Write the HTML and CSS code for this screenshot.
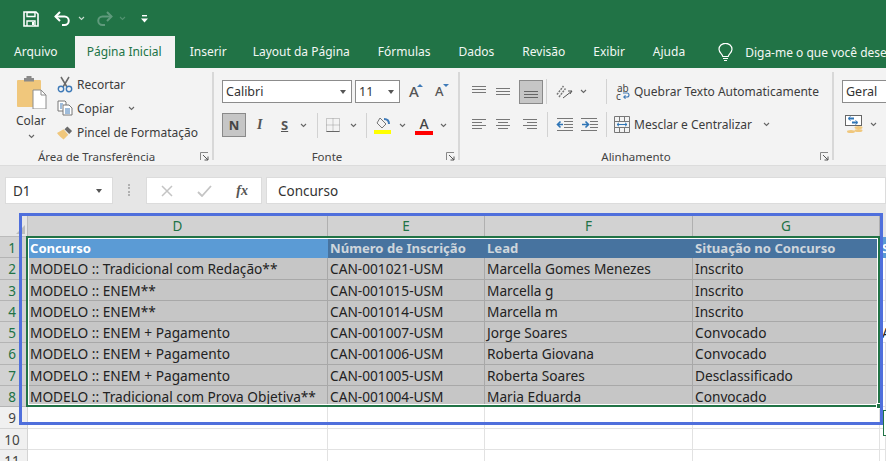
FILE: index.html
```html
<!DOCTYPE html>
<html lang="pt-BR">
<head>
<meta charset="utf-8">
<title>Excel</title>
<link rel="stylesheet" href="styles.css">
</head>
<body>
<div class="app">
  <header class="titlebar">
    <svg class="qa-save" width="16" height="16" viewBox="0 0 16 16"><path d="M1 1h12l2 2v12H1z" fill="none" stroke="#fff" stroke-width="1.6"/><path d="M4 1.500h8v4H4zM4 15v-5h8v5" fill="none" stroke="#fff" stroke-width="1.4"/><rect x="9" y="11" width="2" height="3" fill="#fff"/></svg>
    <svg class="qa-undo" width="17" height="16" viewBox="0 0 17 16"><path d="M1.500 5.500h9a4.200 4.200 0 0 1 0 8.500H8" fill="none" stroke="#fff" stroke-width="2"/><path d="M6 1 1.500 5.500 6 10" fill="none" stroke="#fff" stroke-width="2"/></svg>
    <svg class="chev qa-c1" width="7" height="5" viewBox="0 0 7 5"><path d="M1 1l2.500 2.500L6 1" fill="none" stroke="#c8dcd0" stroke-width="1.100"/></svg>
    <svg class="qa-redo" width="17" height="16" viewBox="0 0 17 16"><path d="M15.500 5.500h-9a4.200 4.200 0 0 0 0 8.500H9" fill="none" stroke="#5f9a7c" stroke-width="2"/><path d="M11 1l4.500 4.500L11 10" fill="none" stroke="#5f9a7c" stroke-width="2"/></svg>
    <svg class="chev qa-c2" width="7" height="5" viewBox="0 0 7 5"><path d="M1 1l2.500 2.500L6 1" fill="none" stroke="#5f9a7c" stroke-width="1.100"/></svg>
    <svg class="qa-more" width="7" height="8" viewBox="0 0 7 8"><rect x="1" y="0" width="5" height="1.400" fill="#fff"/><path d="M0 3.500h7L3.500 7.500z" fill="#fff"/></svg>
  </header>

  <nav class="tabs">
    <span class="tab tab-file">Arquivo</span>
    <span class="tab tab-active">Página Inicial</span>
    <span class="tab tab-ins">Inserir</span>
    <span class="tab">Layout da Página</span>
    <span class="tab">Fórmulas</span>
    <span class="tab">Dados</span>
    <span class="tab">Revisão</span>
    <span class="tab">Exibir</span>
    <span class="tab">Ajuda</span>
    <svg class="bulb" width="15" height="19" viewBox="0 0 15 19"><path d="M4.800 13.500C4.500 11 1 9.800 1 6.300a6.500 6 0 0 1 13 0c0 3.500-3.500 4.700-3.800 7.200z" fill="none" stroke="#fff" stroke-width="1.200"/><path d="M5 15.500h5M6 17.500h3" stroke="#fff" stroke-width="1.200"/></svg>
    <span class="tell">Diga-me o que você dese</span>
  </nav>

  <section class="ribbon">
    <div class="group g-clip">
      <div class="group-body clip-body">
        <div class="paste">
          <svg width="31" height="33" viewBox="0 0 31 33"><rect x="1" y="4" width="24" height="27" rx="1" fill="#f0c77c"/><path d="M8 4V2h2.500V0h5v2H18v3.500H8z" fill="#8a8a8a"/><path d="M17 14h8l5 5v14H17z" fill="#fff" stroke="#8c8c8c"/><path d="M25 14v5h5" fill="none" stroke="#8c8c8c"/></svg>
          <span class="paste-label">Colar</span>
          <svg class="chev" width="7" height="5" viewBox="0 0 7 5"><path d="M1 1l2.500 2.500L6 1" fill="none" stroke="#666" stroke-width="1.100"/></svg>
        </div>
        <div class="clip-list">
          <div class="clip-item">
            <svg width="16" height="17" viewBox="0 0 16 17"><path d="M4 1l6 10M12 1L6 11" stroke="#6a6a6a" stroke-width="1.500" fill="none"/><circle cx="4" cy="13" r="2.700" fill="none" stroke="#3e7ab8" stroke-width="1.400"/><circle cx="12" cy="13" r="2.700" fill="none" stroke="#3e7ab8" stroke-width="1.400"/></svg>
            <span>Recortar</span>
          </div>
          <div class="clip-item">
            <svg width="16" height="16" viewBox="0 0 16 16"><path d="M1 1h7l1 1v9H1z" fill="#fff" stroke="#777"/><path d="M6 5h6l3 3v7H6z" fill="#fff" stroke="#777"/><path d="M3 4h3M3 6h2M3 8h2M8 9h5M8 11h5M8 13h5" stroke="#3e7ab8"/></svg>
            <span>Copiar</span>
            <svg class="chev copy-chev" width="7" height="5" viewBox="0 0 7 5"><path d="M1 1l2.500 2.500L6 1" fill="none" stroke="#666" stroke-width="1.100"/></svg>
          </div>
          <div class="clip-item">
            <svg width="16" height="15" viewBox="0 0 17 15"><path d="M0 8l7-4 5 6-5 5C5 13 2 11 0 8z" fill="#f0c77c"/><path d="M8 4l5 5 3-3-5-5z" fill="#6a6a6a"/></svg>
            <span>Pincel de Formatação</span>
          </div>
        </div>
      </div>
      <div class="group-label clip-label">Área de Transferência<svg class="launch" width="9" height="9" viewBox="0 0 9 9"><path d="M.5 8V.5H8" fill="none" stroke="#888"/><path d="M3 3l5 5M8 4.500V8H4.500" fill="none" stroke="#555"/></svg></div>
    </div>

    <div class="group g-font">
      <div class="group-body font-body">
        <div class="row row-font">
          <div class="combo combo-name"><span>Calibri</span><i class="caret"></i></div>
          <div class="combo combo-size"><span>11</span><i class="caret"></i></div>
          <span class="grow">A<i class="tri-up"></i></span>
          <span class="shrink">A<i class="tri-down"></i></span>
        </div>
        <div class="row row-fmt">
          <span class="btn-on btn-bold">N</span>
          <span class="fmt-i">I</span>
          <span class="fmt-s">S</span>
          <svg class="chev c-s" width="7" height="5" viewBox="0 0 7 5"><path d="M1 1l2.500 2.500L6 1" fill="none" stroke="#666" stroke-width="1.100"/></svg>
          <i class="vsep s1"></i>
          <svg class="borders" width="14" height="14" viewBox="0 0 14 14"><path d="M.5.500h13v13H.5zM7 .5v13M.5 7h13" fill="none" stroke="#9a9a9a" stroke-dasharray="1 1"/><path d="M.5 13.500h13" stroke="#666"/></svg>
          <svg class="chev c-b" width="7" height="5" viewBox="0 0 7 5"><path d="M1 1l2.500 2.500L6 1" fill="none" stroke="#666" stroke-width="1.100"/></svg>
          <i class="vsep s2"></i>
          <svg class="fill" width="17" height="17" viewBox="0 0 17 17"><path d="M6 1l6 6-4 4-5-5z" fill="#f3f3f3" stroke="#777"/><path d="M10 2c3 0 5 2 5 5" fill="none" stroke="#3e7ab8" stroke-width="2"/><rect x="0" y="13" width="17" height="4" fill="#ffff00"/></svg>
          <svg class="chev c-f" width="7" height="5" viewBox="0 0 7 5"><path d="M1 1l2.500 2.500L6 1" fill="none" stroke="#666" stroke-width="1.100"/></svg>
          <span class="color-a">A</span>
          <svg class="chev c-a" width="7" height="5" viewBox="0 0 7 5"><path d="M1 1l2.500 2.500L6 1" fill="none" stroke="#666" stroke-width="1.100"/></svg>
        </div>
      </div>
      <div class="group-label font-label">Fonte<svg class="launch" width="9" height="9" viewBox="0 0 9 9"><path d="M.5 8V.5H8" fill="none" stroke="#888"/><path d="M3 3l5 5M8 4.500V8H4.500" fill="none" stroke="#555"/></svg></div>
    </div>

    <div class="group g-align">
      <div class="group-body align-body">
        <div class="row row-a1">
          <svg class="al" width="16" height="16" viewBox="0 0 16 16"><path d="M1 2.500h14M1 5.500h14M1 8.500h14" stroke="#777"/></svg>
          <svg class="al" width="16" height="16" viewBox="0 0 16 16"><path d="M1 4.500h14M1 7.500h14M1 10.500h14" stroke="#777"/></svg>
          <span class="btn-on btn-va"><svg width="16" height="16" viewBox="0 0 16 16"><path d="M1 7.500h14M1 10.500h14M1 13.500h14" stroke="#666"/></svg></span>
          <i class="vsep v1"></i>
          <svg class="orient" width="20" height="16" viewBox="0 0 20 16"><path d="M2 10.500 8.500 2M4 13l6.500-8.500" stroke="#777" fill="none" stroke-width="1.500" stroke-dasharray="2 1"/><path d="M8 14l9-7M17 7h-4M17 7l-2 3" stroke="#555" fill="none"/></svg>
          <svg class="chev" width="7" height="5" viewBox="0 0 7 5"><path d="M1 1l2.500 2.500L6 1" fill="none" stroke="#666" stroke-width="1.100"/></svg>
          <i class="vsep v2"></i>
          <span class="wrap"><span class="wrap-ab">ab</span><span class="wrap-c">c</span><svg width="7" height="7" viewBox="0 0 7 7"><path d="M0 1h4a2 2 0 0 1 0 4H1M2.500 3.300.8 5l1.700 1.700" fill="none" stroke="#3e7ab8" stroke-width="1.100"/></svg></span>
          <span class="wrap-text">Quebrar Texto Automaticamente</span>
        </div>
        <div class="row row-a2">
          <svg class="al" width="16" height="16" viewBox="0 0 16 16"><path d="M1 2.500h14M1 5.500h10M1 8.500h14M1 11.500h10" stroke="#777"/></svg>
          <svg class="al" width="16" height="16" viewBox="0 0 16 16"><path d="M1 2.500h14M3 5.500h10M1 8.500h14M3 11.500h10" stroke="#777"/></svg>
          <svg class="al al-r" width="16" height="16" viewBox="0 0 16 16"><path d="M1 2.500h14M5 5.500h10M1 8.500h14M5 11.500h10" stroke="#777"/></svg>
          <i class="vsep v3"></i>
          <svg class="ind" width="17" height="14" viewBox="0 0 17 14"><path d="M1 .5h16M8 3.500h9M8 6.500h9M8 9.500h9M1 12.500h16" stroke="#777"/><path d="M7 6.500H2M4.500 3.500l-3 3 3 3" stroke="#2e75b6" stroke-width="1.600" fill="none"/></svg>
          <svg class="ind" width="17" height="14" viewBox="0 0 17 14"><path d="M0 .5h16M9 3.500h8M9 6.500h8M9 9.500h8M0 12.500h16" stroke="#777"/><path d="M1 6.500h6M4.500 3.500l3 3-3 3" stroke="#2e75b6" stroke-width="1.600" fill="none"/></svg>
          <i class="vsep v4"></i>
          <svg class="merge" width="16" height="17" viewBox="0 0 16 17"><path d="M.5.500h15v16H.5zM.5 5.500h15M.5 11.500h15M5.500.5v5M10.500.5v5M5.500 11.500v5M10.500 11.500v5" fill="none" stroke="#777"/><path d="M3 8.500h10M5 6.800 3 8.500l2 1.700M11 6.800l2 1.700-2 1.700" fill="none" stroke="#2e75b6"/></svg>
          <span class="merge-text">Mesclar e Centralizar</span>
          <svg class="chev" width="7" height="5" viewBox="0 0 7 5"><path d="M1 1l2.500 2.500L6 1" fill="none" stroke="#666" stroke-width="1.100"/></svg>
        </div>
      </div>
      <div class="group-label align-label">Alinhamento<svg class="launch" width="9" height="9" viewBox="0 0 9 9"><path d="M.5 8V.5H8" fill="none" stroke="#888"/><path d="M3 3l5 5M8 4.500V8H4.500" fill="none" stroke="#555"/></svg></div>
    </div>

    <div class="group g-num">
      <div class="group-body num-body">
        <div class="combo combo-num"><span>Geral</span></div>
        <div class="row row-n">
          <svg width="18" height="19" viewBox="0 0 18 19"><rect x=".5" y=".5" width="16" height="10" fill="#fff" stroke="#666"/><path d="M4 3.500h5M12 7.500H7" stroke="#2e75b6" stroke-width="2"/><path d="M5.500 1.500 3 3.500l2.500 2M10.500 5.500 13 7.500l-2.500 2" fill="none" stroke="#2e75b6"/><ellipse cx="13.500" cy="12.500" rx="4" ry="1.500" fill="#f0c77c"/><ellipse cx="13.500" cy="15.500" rx="4" ry="1.500" fill="#f0c77c"/><ellipse cx="6" cy="16.500" rx="4" ry="1.500" fill="#f0c77c"/></svg>
          <svg class="chev" width="7" height="5" viewBox="0 0 7 5"><path d="M1 1l2.500 2.500L6 1" fill="none" stroke="#666" stroke-width="1.100"/></svg>
        </div>
      </div>
    </div>
  </section>

  <section class="formula">
    <div class="name-box"><span>D1</span><i class="caret"></i></div>
    <div class="grip"></div>
    <div class="fx-box">
      <svg width="12" height="12" viewBox="0 0 12 12"><path d="M1 1l10 10M11 1L1 11" stroke="#c4c4c4" stroke-width="1.500"/></svg>
      <svg width="15" height="12" viewBox="0 0 15 12"><path d="M1 7l4 4L14 1" fill="none" stroke="#c4c4c4" stroke-width="1.800"/></svg>
      <span class="fx">fx</span>
    </div>
    <div class="formula-input">Concurso</div>
  </section>

  <section class="sheet">
    <div class="corner"><i></i></div>
    <div class="colh">D</div><div class="colh">E</div><div class="colh">F</div><div class="colh">G</div><div class="colh off"></div>

    <div class="rowh">1</div><div class="cell head first">Concurso</div><div class="cell head">Número de Inscrição</div><div class="cell head">Lead</div><div class="cell head">Situação no Concurso</div><div class="cell head-out">S</div>

    <div class="rowh">2</div><div class="cell sel">MODELO :: Tradicional com Redação**</div><div class="cell sel">CAN-001021-USM</div><div class="cell sel">Marcella Gomes Menezes</div><div class="cell sel">Inscrito</div><div class="cell"></div>
    <div class="rowh">3</div><div class="cell sel">MODELO :: ENEM**</div><div class="cell sel">CAN-001015-USM</div><div class="cell sel">Marcella g</div><div class="cell sel">Inscrito</div><div class="cell"></div>
    <div class="rowh">4</div><div class="cell sel">MODELO :: ENEM**</div><div class="cell sel">CAN-001014-USM</div><div class="cell sel">Marcella m</div><div class="cell sel">Inscrito</div><div class="cell"></div>
    <div class="rowh">5</div><div class="cell sel">MODELO :: ENEM + Pagamento</div><div class="cell sel">CAN-001007-USM</div><div class="cell sel">Jorge Soares</div><div class="cell sel">Convocado</div><div class="cell out">A</div>
    <div class="rowh">6</div><div class="cell sel">MODELO :: ENEM + Pagamento</div><div class="cell sel">CAN-001006-USM</div><div class="cell sel">Roberta Giovana</div><div class="cell sel">Convocado</div><div class="cell"></div>
    <div class="rowh">7</div><div class="cell sel">MODELO :: ENEM + Pagamento</div><div class="cell sel">CAN-001005-USM</div><div class="cell sel">Roberta Soares</div><div class="cell sel">Desclassificado</div><div class="cell"></div>
    <div class="rowh">8</div><div class="cell sel">MODELO :: Tradicional com Prova Objetiva**</div><div class="cell sel">CAN-001004-USM</div><div class="cell sel">Maria Eduarda</div><div class="cell sel">Convocado</div><div class="cell"></div>

    <div class="rowh off">9</div><div class="cell"></div><div class="cell"></div><div class="cell"></div><div class="cell"></div><div class="cell"></div>
    <div class="rowh off">10</div><div class="cell"></div><div class="cell"></div><div class="cell"></div><div class="cell"></div><div class="cell"></div>
    <div class="rowh off">11</div><div class="cell"></div><div class="cell"></div><div class="cell"></div><div class="cell"></div><div class="cell"></div>

    <div class="selection"><i class="handle"></i></div>
    <div class="quick"></div>
    <div class="highlight"></div>
  </section>
</div>
</body>
</html>
```
FILE: styles.css
```css
* { box-sizing: border-box; }
html, body { margin: 0; padding: 0; }
body { background: #e6e6e6; font-family: "Noto Sans", "Open Sans", sans-serif; color: #333; }
i { display: block; }
svg { display: block; flex: none; }
.app { width: 886px; height: 461px; overflow: hidden; position: relative; }

.titlebar { height: 36px; background: #217346; display: flex; align-items: center; padding: 1px 0 0 23px; }
.qa-undo { margin-left: 15px; }
.qa-c1 { margin-left: 7px; }
.qa-redo { margin-left: 11px; }
.qa-c2 { margin-left: 6px; opacity: .8; }
.qa-more { margin-left: 15px; }

.tabs { height: 32px; background: #217346; display: flex; align-items: center; font-size: 12px; color: #f2f7f4; white-space: nowrap; overflow: hidden; }
.tab { padding: 0 14px; line-height: 32px; }
.tab-file { margin-right: 3px; }
.tab-active { background: #f3f3f3; color: #217346; padding: 0 13px 0 12px; margin-right: 1px; }
.tab-ins { padding-right: 12px; }
.bulb { margin-left: 19px; }
.tell { margin-left: 12px; }

.ribbon { height: 98px; background: #f3f3f3; border-bottom: 1px solid #dcdcdc; display: flex; font-size: 12px; color: #3c3c3c; }
.group { display: flex; flex-direction: column; border-right: 2px solid #d8d8d8; margin: 4px 0 5px; position: relative; flex: none; }
.group-body { height: 76px; }
.group-label { height: 13px; line-height: 19px; font-size: 11.500px; text-align: center; color: #444; position: relative; white-space: nowrap; }
.launch { position: absolute; right: 3px; top: 5px; }
.g-clip { width: 214px; }
.g-font { width: 246px; }
.g-align { width: 374px; }
.g-num { width: 52px; border-right: 0; }
.clip-label { padding-right: 19px; }
.font-label { padding-right: 18px; }
.align-label { padding-right: 20px; }

.clip-body { display: flex; padding-left: 16px; }
.paste { width: 41px; display: flex; flex-direction: column; align-items: flex-start; padding-top: 4px; }
.paste-label { margin-top: 4px; line-height: 16px; }
.paste .chev { margin: 5px 0 0 12px; }
.clip-list { display: flex; flex-direction: column; }
.clip-item { height: 24px; display: flex; align-items: center; gap: 4px; white-space: nowrap; }
.copy-chev { margin-left: 10px; }

.row { display: flex; align-items: center; }
.font-body { padding: 8px 0 0 8px; }
.row-font { height: 23px; }
.row-fmt { height: 24px; margin-top: 10px; }
.combo { height: 23px; background: #fff; border: 1px solid #8c8c8c; display: flex; align-items: center; justify-content: space-between; padding: 0 5px 0 3px; font-size: 12.500px; color: #333; flex: none; }
.combo-name { width: 130px; }
.combo-size { width: 45px; margin-left: 3px; }
.caret { width: 0; height: 0; border-left: 3.500px solid transparent; border-right: 3.500px solid transparent; border-top: 4px solid #555; }
.grow, .shrink { font-size: 15px; color: #555; line-height: 23px; position: relative; font-weight: 500; }
.grow { margin-left: 9px; width: 26px; }
.shrink { font-size: 13px; }
.tri-up, .tri-down { position: absolute; left: 8px; top: 4px; width: 0; height: 0; border-left: 3px solid transparent; border-right: 3px solid transparent; }
.tri-up { border-bottom: 3px solid #3e7ab8; }
.tri-down { border-top: 3px solid #3e7ab8; }
.btn-on { background: #c6c6c6; border: 1px solid #8a8a8a; display: flex; align-items: center; justify-content: center; flex: none; }
.btn-bold { width: 24px; height: 24px; font-weight: 700; font-size: 13px; color: #444; }
.fmt-i { font-family: "Liberation Serif", serif; font-style: italic; font-weight: 700; font-size: 14px; color: #555; margin-left: 11px; width: 8px; }
.fmt-s { font-weight: 700; font-size: 13px; color: #555; text-decoration: underline; margin-left: 16px; width: 10px; }
.c-s { margin-left: 9px; }
.vsep { width: 1px; height: 25px; background: #d2d2d2; flex: none; }
.s1 { margin-left: 10px; }
.borders { margin-left: 8px; }
.c-b { margin-left: 10px; }
.s2 { margin-left: 9px; }
.fill { margin-left: 7px; }
.c-f { margin-left: 8px; }
.color-a { margin-left: 9px; width: 18px; text-align: center; font-size: 14px; line-height: 15px; font-weight: 500; color: #444; border-bottom: 4px solid #ff0000; }
.c-a { margin-left: 7px; }

.align-body { padding: 8px 0 0 11px; }
.row-a1 { height: 23px; }
.row-a2 { height: 25px; margin-top: 9px; }
.al { margin-right: 8px; }
.al-r { margin-right: 0; margin-left: 3px; }
.btn-va { width: 24px; height: 24px; }
.v1 { margin-left: 3px; }
.orient { margin-left: 8px; }
.row-a1 .chev { margin-left: 5px; }
.v2 { margin-left: 19px; }
.wrap { margin-left: 9px; width: 14px; display: grid; grid-template-columns: 7px 7px; grid-template-rows: 8px 8px; font-size: 10px; line-height: 8px; color: #444; align-items: center; }
.wrap-ab { grid-column: 1 / 3; padding-left: 1px; }
.wrap-c { grid-row: 2; }
.wrap-text { margin-left: 4px; white-space: nowrap; }
.v3 { margin-left: 9px; }
.ind { margin-left: 8px; }
.v4 { margin-left: 8px; }
.merge { margin-left: 7px; }
.merge-text { margin-left: 4px; white-space: nowrap; }
.row-a2 .chev { margin-left: 11px; }

.num-body { padding: 8px 0 0 8px; }
.combo-num { width: 44px; border-right: 0; }
.row-n { margin-top: 12px; padding-left: 3px; gap: 7px; }

.formula { height: 39px; background: #e6e6e6; padding: 11px 0 0 5px; display: flex; font-size: 13.500px; color: #333; }
.name-box { width: 108px; height: 27px; background: #fff; border: 1px solid #dcdcdc; display: flex; align-items: center; justify-content: space-between; padding: 0 10px 0 7px; }
.grip { width: 2px; height: 12px; margin: 7px 16px 0 15px; border-left: 2px dotted #b0b0b0; }
.fx-box { width: 116px; height: 27px; background: #fff; border: 1px solid #dcdcdc; display: flex; align-items: center; justify-content: space-between; padding: 0 13px 0 14px; }
.fx { font-family: "Liberation Serif", serif; font-style: italic; font-weight: 700; font-size: 14px; color: #555; }
.formula-input { flex: 1; height: 27px; background: #fff; border: 1px solid #dcdcdc; margin-left: 4px; line-height: 26px; padding-left: 11px; }

.sheet { position: relative; display: grid; grid-template-columns: 28px 300px 157px 208px 187px 6px; grid-template-rows: 22px repeat(11, 21.300px); background: #fff; margin-top: 10px; font-size: 13.700px; color: #222; }
.corner { background: #e6e6e6; position: relative; border-right: 1px solid #bbb; border-bottom: 1px solid #bbb; }
.corner i { position: absolute; right: 2px; bottom: 2px; width: 0; height: 0; border-left: 9px solid transparent; border-bottom: 9px solid #bdbdbd; }
.colh { background: #d2d2d2; border-right: 1px solid #b0b0b0; text-align: center; line-height: 22px; color: #217346; font-size: 13.500px; }
.colh.off { background: #e6e6e6; border-right: 0; }
.rowh { background: #d2d2d2; color: #217346; border-right: 1px solid #b0b0b0; border-bottom: 1px solid #b4b4b4; text-align: center; line-height: 22px; padding-right: 3px; font-size: 13.500px; }
.rowh.off { background: #f0f0f0; color: #444; border-bottom: 1px solid #d4d4d4; border-right: 1px solid #d4d4d4; }
.cell { border-right: 1px solid #e2e2e2; border-bottom: 1px solid #e2e2e2; padding-left: 2px; line-height: 22px; white-space: nowrap; overflow: hidden; }
.sel { background: #c6c6c6; border-color: #a8a8a8; }
.head { background: #47739f; color: #cfd6dc; font-weight: 700; font-size: 13.100px; border-color: #47739f; }
.head.first { background: #5b9bd5; color: #fff; border-color: #5b9bd5; }
.head-out { background: #5b9bd5; color: #fff; font-weight: 700; font-size: 13.100px; border: 0; }
.out { border-right: 0; }

.selection { position: absolute; left: 26px; top: 21px; width: 854px; height: 171px; border: 2px solid #217346; box-shadow: inset 0 0 0 1px #fff; }
.handle { position: absolute; right: -4px; bottom: -4px; width: 6px; height: 6px; background: #217346; border: 1px solid #fff; }
.quick { position: absolute; left: 883px; top: 195px; width: 10px; height: 26px; background: #fff; border: 1px solid #217346; }
.highlight { position: absolute; left: 19px; top: -2px; width: 864px; height: 212px; border: 3px solid #4f6fdc; }
```
